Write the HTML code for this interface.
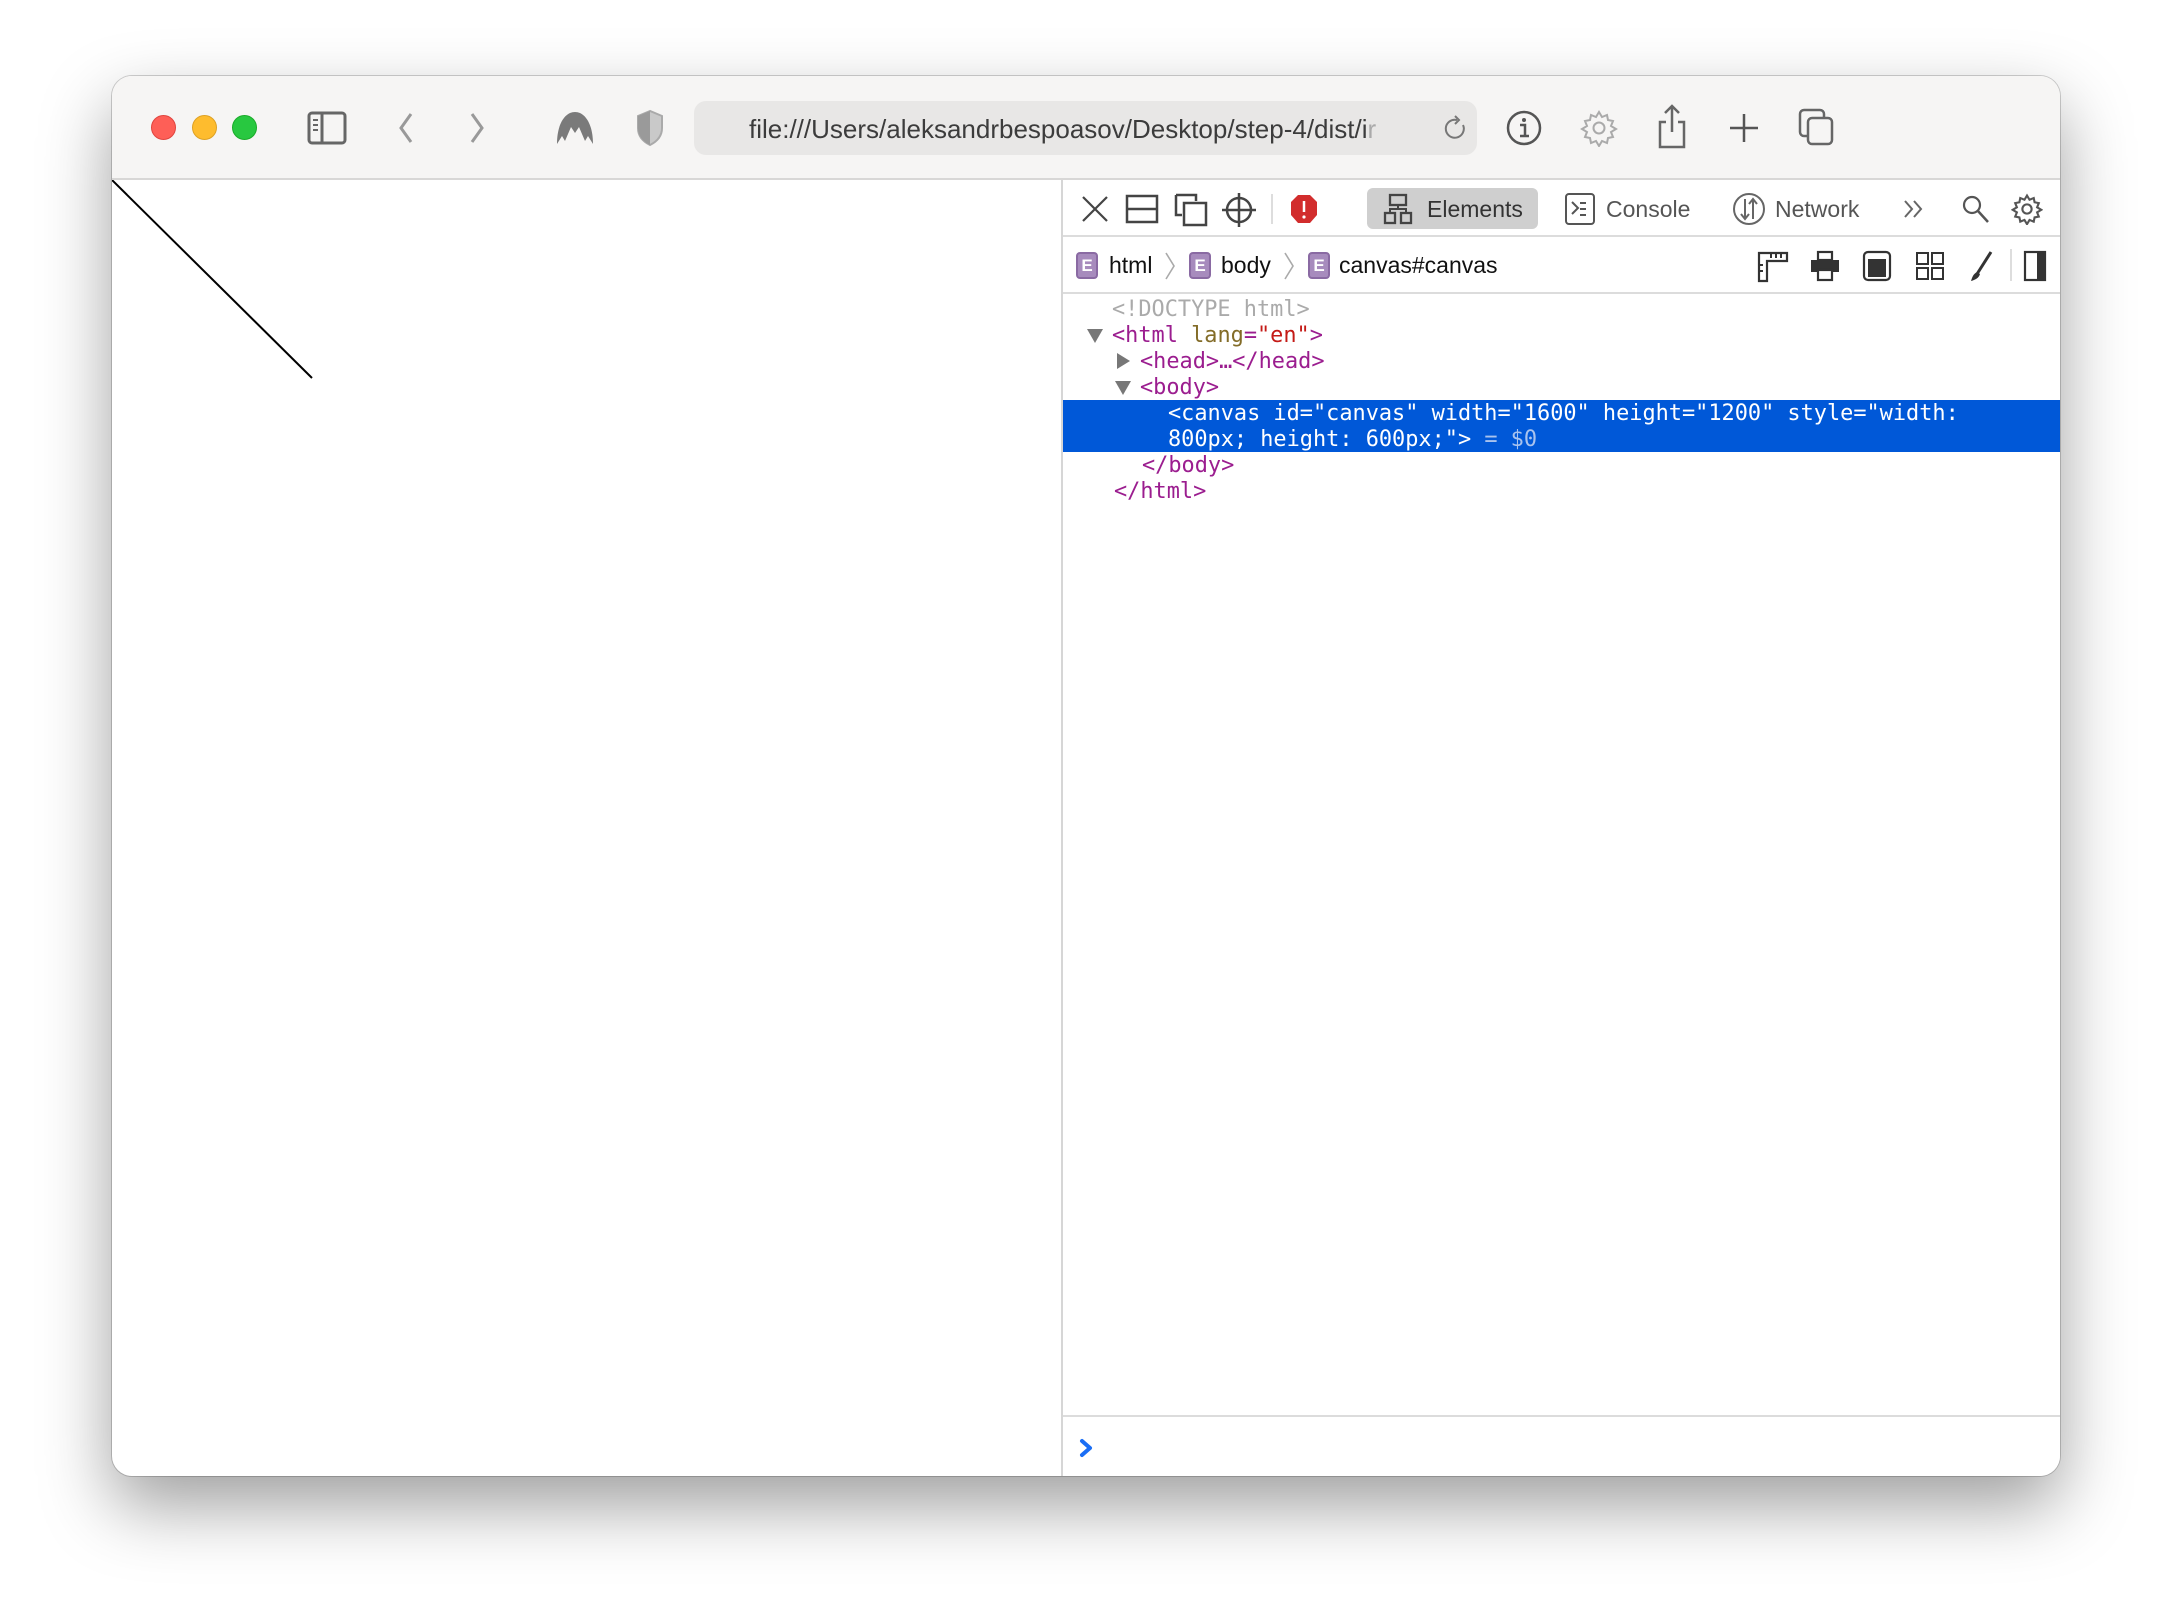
<!DOCTYPE html>
<html><head><meta charset="utf-8"><style>
*{margin:0;padding:0;box-sizing:border-box}
body{width:2172px;height:1624px;background:#fff;position:relative;overflow:hidden;font-family:"Liberation Sans",sans-serif}
.win{position:absolute;left:112px;top:76px;width:1948px;height:1400px;border-radius:20px;background:#fff;box-shadow:0 30px 70px rgba(0,0,0,.38),0 0 0 1px rgba(0,0,0,.18);overflow:hidden}
.tb{position:absolute;left:0;top:0;width:100%;height:104px;background:#f6f5f4;border-bottom:2px solid #d8d7d6}
.a{position:absolute}
.dot{position:absolute;width:25px;height:25px;border-radius:50%;top:39px}
.url{position:absolute;left:582px;top:25px;width:783px;height:54px;background:#e8e7e6;border-radius:12px}
.url span{position:absolute;left:55px;top:13px;font-size:26px;color:#3c3c3c;white-space:nowrap}
.dv{position:absolute;left:949px;top:104px;right:0;bottom:0;border-left:2px solid #d6d6d6;background:#fff}
.row1{position:absolute;left:0;top:0;right:0;height:57px;border-bottom:2px solid #dcdcdc}
.row2{position:absolute;left:0;top:57px;right:0;height:57px;border-bottom:2px solid #dcdcdc}
.code{position:absolute;left:0;top:114px;right:0;height:300px;font-family:"DejaVu Sans Mono","Liberation Mono",monospace;font-size:21.9px;line-height:26px;color:#9b1d8f}
.ln{position:absolute;white-space:pre}
.sel{position:absolute;left:0;right:0;top:106px;height:52px;background:#0058d8}
.t{color:#9b1d8f}.n{color:#836c28}.v{color:#c41a16}
.tri{position:absolute;width:0;height:0}
.bc{position:absolute;top:15px;font-size:23px;color:#111}
.chev{position:absolute;top:14px}
.E{position:absolute;top:15px;width:22px;height:27px;background:#a78bbd;border:2px solid #8a6aa3;border-radius:4px;color:#fff;font-size:17px;text-align:center;line-height:23px;font-weight:bold}
</style></head><body>
<div class="win">
 <div class="tb">
  <div class="dot" style="left:39px;background:#fe5f57;border:1px solid #e0443e"></div>
  <div class="dot" style="left:80px;background:#febc2e;border:1px solid #dea123"></div>
  <div class="dot" style="left:120px;background:#28c840;border:1px solid #1aab29"></div>
  <svg class="a" style="left:195px;top:35px" width="40" height="34" viewBox="0 0 40 34"><rect x="2" y="2" width="36" height="30" rx="3" fill="none" stroke="#666" stroke-width="3"/><line x1="15" y1="2" x2="15" y2="32" stroke="#666" stroke-width="3"/><path d="M6 9h5M6 14h5M6 19h5" stroke="#666" stroke-width="2"/></svg>
  <svg class="a" style="left:284px;top:35px" width="20" height="34"><path d="M15 3L5 17l10 14" fill="none" stroke="#999" stroke-width="3"/></svg>
  <svg class="a" style="left:355px;top:35px" width="20" height="34"><path d="M5 3l10 14L5 31" fill="none" stroke="#999" stroke-width="3"/></svg>
  <svg class="a" style="left:443px;top:34px" width="40" height="36" viewBox="0 0 40 36"><path d="M2 34C2 14 10 2 20 2s18 12 18 32l-5-8-3 5-6-14-4 6-4-6-6 14-3-5z" fill="#7a7a7a"/></svg>
  <svg class="a" style="left:523px;top:33px" width="30" height="38"><path d="M15 2L3 7v12c0 9 6 14 12 17 6-3 12-8 12-17V7z" fill="#c9c9c9" stroke="#aaa" stroke-width="2"/><path d="M15 2v34c-6-3-12-8-12-17V7z" fill="#9a9a9a"/></svg>
  <div class="url"><span>file:///Users/aleksandrbespoasov/Desktop/step-4/dist/i<span style="position:static;color:#aaa">r</span></span>
   <svg class="a" style="left:749px;top:14px" width="26" height="28"><path d="M20 10a9 9 0 1 1-6-5" fill="none" stroke="#777" stroke-width="2"/><path d="M12 1l4 4-4 4" fill="none" stroke="#777" stroke-width="2"/></svg></div>
  <svg class="a" style="left:1393px;top:33px" width="38" height="38"><circle cx="19" cy="19" r="16" fill="none" stroke="#555" stroke-width="2.5"/><circle cx="19" cy="11" r="2" fill="#555"/><path d="M15 16h5v11M15 27h9" stroke="#555" stroke-width="2.5" fill="none"/></svg>
  <svg class="a" style="left:1468px;top:33px" width="38" height="38" viewBox="0 0 38 38"><circle cx="19" cy="19" r="5.5" fill="none" stroke="#aaa" stroke-width="2"/><path d="M19 3l3 5 5-2 1 5 5 1-2 5 5 3-5 3 2 5-5 1-1 5-5-2-3 5-3-5-5 2-1-5-5-1 2-5-5-3 5-3-2-5 5-1 1-5 5 2z" fill="none" stroke="#aaa" stroke-width="2"/></svg>
  <svg class="a" style="left:1544px;top:28px" width="32" height="46"><path d="M10 18H4v25h24V18h-6M16 2v26M9 9l7-7 7 7" fill="none" stroke="#666" stroke-width="2.5"/></svg>
  <svg class="a" style="left:1617px;top:37px" width="30" height="30"><path d="M15 1v28M1 15h28" stroke="#555" stroke-width="2.5"/></svg>
  <svg class="a" style="left:1685px;top:31px" width="40" height="40"><rect x="3" y="3" width="24" height="26" rx="4" fill="none" stroke="#666" stroke-width="2.5"/><rect x="11" y="11" width="24" height="26" rx="4" fill="#f6f5f4" stroke="#666" stroke-width="2.5"/></svg>
 </div>
 <svg class="a" style="left:0;top:104px" width="949" height="300"><line x1="0" y1="0" x2="200" y2="198" stroke="#000" stroke-width="2"/></svg>
 <div class="dv">
  <div class="row1">
   <svg class="a" style="left:18px;top:15px" width="28" height="28"><path d="M2 2l24 24M26 2L2 26" stroke="#444" stroke-width="2.2"/></svg>
   <svg class="a" style="left:62px;top:14px" width="34" height="30"><rect x="2" y="2" width="30" height="26" fill="none" stroke="#444" stroke-width="2.5"/><line x1="2" y1="15" x2="32" y2="15" stroke="#444" stroke-width="2.5"/></svg>
   <svg class="a" style="left:111px;top:13px" width="36" height="34"><path d="M2 2h20v6M2 2v20h6" fill="none" stroke="#444" stroke-width="2.5"/><rect x="10" y="10" width="22" height="22" fill="none" stroke="#444" stroke-width="2.5"/></svg>
   <svg class="a" style="left:158px;top:12px" width="36" height="36"><circle cx="18" cy="18" r="12" fill="none" stroke="#444" stroke-width="2.5"/><path d="M18 1v34M1 18h34" stroke="#444" stroke-width="2.5"/></svg>
   <div class="a" style="left:208px;top:14px;width:2px;height:30px;background:#ddd"></div>
   <svg class="a" style="left:227px;top:14px" width="28" height="30"><path d="M8 1h12l7 7v13l-7 8H8l-7-8V8z" fill="#d22d2d"/><path d="M14 7v11" stroke="#fff" stroke-width="2.5"/><circle cx="14" cy="23" r="1.6" fill="#fff"/></svg>
   <div class="a" style="left:304px;top:8px;width:171px;height:41px;background:#cfcfcf;border-radius:6px"></div>
   <svg class="a" style="left:320px;top:13px" width="30" height="32"><rect x="7" y="2" width="16" height="10" fill="none" stroke="#444" stroke-width="2.3"/><rect x="2" y="20" width="10" height="10" fill="none" stroke="#444" stroke-width="2.3"/><rect x="18" y="20" width="10" height="10" fill="none" stroke="#444" stroke-width="2.3"/><path d="M15 12v4H7v4M15 16h8v4" fill="none" stroke="#444" stroke-width="2"/></svg>
   <div class="a" style="left:364px;top:16px;font-size:23px;color:#333">Elements</div>
   <svg class="a" style="left:501px;top:12px" width="32" height="34"><rect x="2" y="2" width="28" height="30" rx="3" fill="none" stroke="#555" stroke-width="2"/><path d="M8 10l6 6-6 6M16 11h6M16 17h6M16 23h6" fill="none" stroke="#555" stroke-width="2"/></svg>
   <div class="a" style="left:543px;top:16px;font-size:23px;color:#555">Console</div>
   <svg class="a" style="left:669px;top:12px" width="34" height="34"><circle cx="17" cy="17" r="15" fill="none" stroke="#666" stroke-width="2"/><path d="M13 7v20M9 22l4 5 4-5M21 27V7M17 12l4-5 4 5" fill="none" stroke="#666" stroke-width="2"/></svg>
   <div class="a" style="left:712px;top:16px;font-size:23px;color:#555">Network</div>
   <svg class="a" style="left:839px;top:18px" width="24" height="22"><path d="M3 3l7 8-7 8M12 3l7 8-7 8" fill="none" stroke="#666" stroke-width="2"/></svg>
   <svg class="a" style="left:898px;top:14px" width="30" height="30"><circle cx="11" cy="11" r="8" fill="none" stroke="#555" stroke-width="2.2"/><path d="M17 17l10 11" stroke="#555" stroke-width="2.5"/></svg>
   <svg class="a" style="left:948px;top:13px" width="32" height="32" viewBox="0 0 38 38"><circle cx="19" cy="19" r="5.5" fill="none" stroke="#555" stroke-width="2.5"/><path d="M19 3l3 5 5-2 1 5 5 1-2 5 5 3-5 3 2 5-5 1-1 5-5-2-3 5-3-5-5 2-1-5-5-1 2-5-5-3 5-3-2-5 5-1 1-5 5 2z" fill="none" stroke="#555" stroke-width="2.5"/></svg>
  </div>
  <div class="row2">
   <div class="E" style="left:13px">E</div><div class="bc" style="left:46px">html</div>
   <svg class="chev" style="left:100px" width="14" height="30"><path d="M3 2l8 13-8 13" fill="none" stroke="#aaa" stroke-width="1.6"/></svg>
   <div class="E" style="left:126px">E</div><div class="bc" style="left:158px">body</div>
   <svg class="chev" style="left:219px" width="14" height="30"><path d="M3 2l8 13-8 13" fill="none" stroke="#aaa" stroke-width="1.6"/></svg>
   <div class="E" style="left:245px">E</div><div class="bc" style="left:276px">canvas#canvas</div>
   <svg class="a" style="left:694px;top:14px" width="32" height="32"><path d="M2 30V2h28v8H10v20z" fill="none" stroke="#333" stroke-width="2.2"/><path d="M14 2v5M19 2v5M24 2v5M2 14h4M2 20h4" stroke="#333" stroke-width="2"/></svg>
   <svg class="a" style="left:746px;top:13px" width="32" height="32"><rect x="9" y="2" width="14" height="8" fill="none" stroke="#333" stroke-width="2.2"/><rect x="2" y="10" width="28" height="12" fill="#333"/><rect x="9" y="20" width="14" height="10" fill="#fff" stroke="#333" stroke-width="2.2"/></svg>
   <svg class="a" style="left:799px;top:13px" width="30" height="32"><rect x="2" y="2" width="26" height="28" rx="4" fill="none" stroke="#333" stroke-width="2.2"/><rect x="6" y="9" width="18" height="18" fill="#333"/></svg>
   <svg class="a" style="left:852px;top:14px" width="30" height="30"><rect x="2" y="2" width="11" height="11" fill="none" stroke="#333" stroke-width="2"/><rect x="17" y="2" width="11" height="11" fill="none" stroke="#333" stroke-width="2"/><rect x="2" y="17" width="11" height="11" fill="none" stroke="#333" stroke-width="2"/><rect x="17" y="17" width="11" height="11" fill="none" stroke="#333" stroke-width="2"/></svg>
   <svg class="a" style="left:906px;top:13px" width="26" height="32"><path d="M22 2L8 24" stroke="#333" stroke-width="3"/><path d="M8 22c-4 2-5 6-6 9 4-1 8-3 9-7z" fill="#333"/></svg>
   <div class="a" style="left:947px;top:12px;width:2px;height:32px;background:#ddd"></div>
   <svg class="a" style="left:960px;top:13px" width="24" height="32"><rect x="2" y="2" width="20" height="28" fill="none" stroke="#333" stroke-width="2.2"/><rect x="14" y="2" width="8" height="28" fill="#333"/></svg>
  </div>
  <div class="code">
   <div class="sel"></div>
   <div class="ln" style="left:49px;top:3px;color:#aaa">&lt;!DOCTYPE html&gt;</div>
   <div class="tri" style="left:24px;top:35px;border-left:8px solid transparent;border-right:8px solid transparent;border-top:14px solid #777"></div>
   <div class="ln" style="left:49px;top:29px"><span class="t">&lt;html</span> <span class="n">lang</span>=<span class="v">"en"</span><span class="t">&gt;</span></div>
   <div class="tri" style="left:54px;top:59px;border-top:8px solid transparent;border-bottom:8px solid transparent;border-left:13px solid #777"></div>
   <div class="ln" style="left:77px;top:55px">&lt;head&gt;…&lt;/head&gt;</div>
   <div class="tri" style="left:52px;top:87px;border-left:8px solid transparent;border-right:8px solid transparent;border-top:14px solid #777"></div>
   <div class="ln" style="left:77px;top:81px">&lt;body&gt;</div>
   <div class="ln" style="left:105px;top:107px;color:#fff">&lt;canvas id="canvas" width="1600" height="1200" style="width:</div>
   <div class="ln" style="left:105px;top:133px;color:#fff">800px; height: 600px;"&gt; <span style="color:#a9c3ee">= $0</span></div>
   <div class="ln" style="left:79px;top:159px">&lt;/body&gt;</div>
   <div class="ln" style="left:51px;top:185px">&lt;/html&gt;</div>
  </div>
  <div class="a" style="left:0;right:0;top:1235px;height:2px;background:#dcdcdc"></div>
  <svg class="a" style="left:16px;top:1258px" width="16" height="20"><path d="M3 3l8 7-8 7" fill="none" stroke="#1a6ef5" stroke-width="4" stroke-linecap="round" stroke-linejoin="round"/></svg>
 </div>
</div>
</body></html>
